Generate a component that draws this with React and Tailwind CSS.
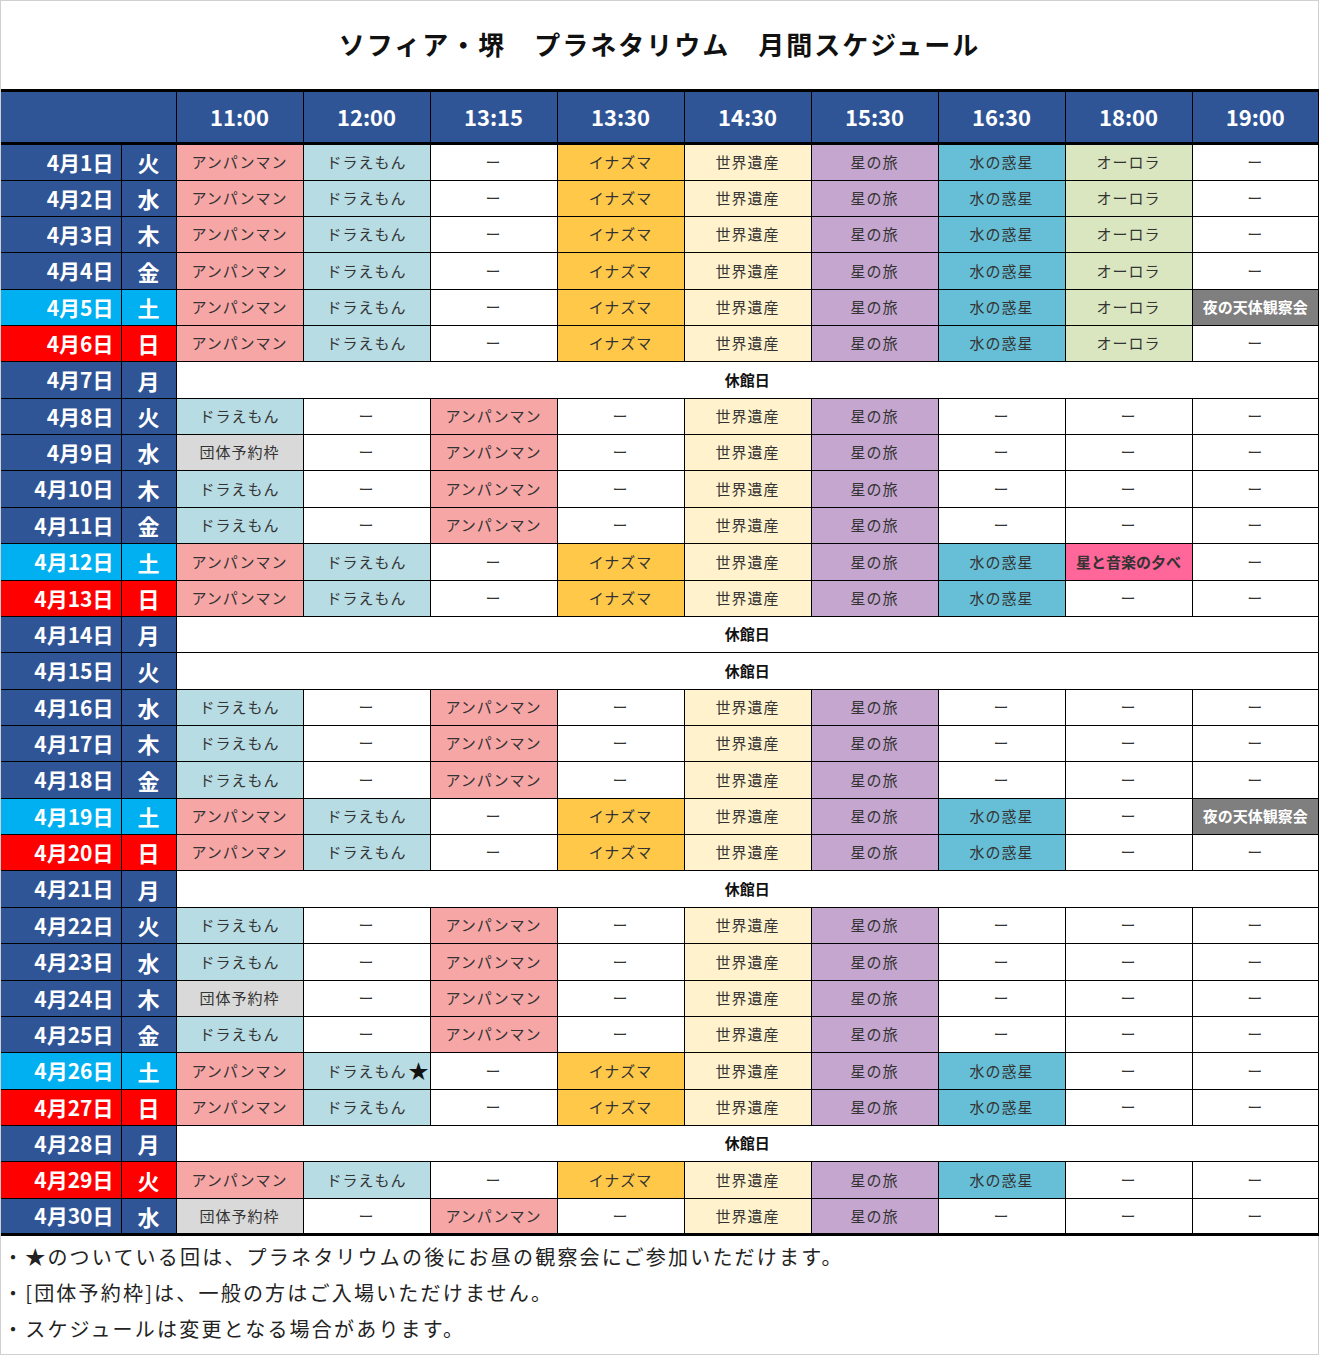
import React from "react";

// programme name -> cell look
const SHOWS = {
  A: { label: "アンパンマン", bg: "bg-[#F7A6A6]" },
  D: { label: "ドラえもん", bg: "bg-[#B7DCE4]" },
  S: { label: "世界遺産", bg: "bg-[#FFF2CC]" },
  I: { label: "イナズマ", bg: "bg-[#FFC848]" },
  H: { label: "星の旅", bg: "bg-[#C4A6CE]" },
  M: { label: "水の惑星", bg: "bg-[#66BFD6]" },
  O: { label: "オーロラ", bg: "bg-[#D9E6BF]" },
  G: { label: "団体予約枠", bg: "bg-[#D9D9D9]" },
  N: { label: "夜の天体観察会", bg: "bg-[#7F7F7F]", special: "text-white font-bold tracking-normal" },
  K: { label: "星と音楽の夕べ", bg: "bg-[#FF6699]", special: "text-[#1a1a1a] font-bold tracking-normal" },
  "-": { label: "ー", bg: "bg-white" },
};

const TIMES = ["11:00", "12:00", "13:15", "13:30", "14:30", "15:30", "16:30", "18:00", "19:00"];

const WEEK = "A D - I S H M O -";
const QUIET = "D - A - S H - - -";

// [day, weekday, kind, schedule] kind: w = weekday, s = saturday, h = sunday/holiday
const DAYS = [
  [1, "火", "w", WEEK],
  [2, "水", "w", WEEK],
  [3, "木", "w", WEEK],
  [4, "金", "w", WEEK],
  [5, "土", "s", "A D - I S H M O N"],
  [6, "日", "h", WEEK],
  [7, "月", "w", null],
  [8, "火", "w", QUIET],
  [9, "水", "w", "G - A - S H - - -"],
  [10, "木", "w", QUIET],
  [11, "金", "w", QUIET],
  [12, "土", "s", "A D - I S H M K -"],
  [13, "日", "h", "A D - I S H M - -"],
  [14, "月", "w", null],
  [15, "火", "w", null],
  [16, "水", "w", QUIET],
  [17, "木", "w", QUIET],
  [18, "金", "w", QUIET],
  [19, "土", "s", "A D - I S H M - N"],
  [20, "日", "h", "A D - I S H M - -"],
  [21, "月", "w", null],
  [22, "火", "w", QUIET],
  [23, "水", "w", QUIET],
  [24, "木", "w", "G - A - S H - - -"],
  [25, "金", "w", QUIET],
  [26, "土", "s", "A D* - I S H M - -"],
  [27, "日", "h", "A D - I S H M - -"],
  [28, "月", "w", null],
  [29, "火", "h", "A D - I S H M - -"],
  [30, "水", "w", "G - A - S H - - -"],
];

const DAY_BG = { w: "bg-[#2F5597]", s: "bg-[#00B0F0]", h: "bg-[#FF0000]" };

const FONT = { fontFamily: '"Noto Sans CJK JP", "Noto Sans", sans-serif' };

function ShowCell({ code }) {
  const star = code.endsWith("*");
  const show = SHOWS[star ? code.slice(0, -1) : code];
  return (
    <td
      className={`relative border border-black text-center text-[15px] tracking-[1px] text-[#333] p-0 whitespace-nowrap ${show.bg} ${show.special || ""}`}
    >
      {show.label}
      {star && (
        <span className="absolute right-[1px] top-1/2 -translate-y-1/2 text-[20px] text-[#111] tracking-normal">
          ★
        </span>
      )}
    </td>
  );
}

export default function App() {
  return (
    <div className="w-[1319px] h-[1355px] bg-white border border-[#d0d0d0]" style={FONT}>
      <div className="h-[88px] flex items-center justify-center pb-[3px]">
        <h1 className="text-[26px] font-bold tracking-[2px] text-[#111]">
          ソフィア・堺　プラネタリウム　月間スケジュール
        </h1>
      </div>

      <table className="table-fixed border-collapse w-[1317px] border-y-[3px] border-r-2 border-black">
        <colgroup>
          <col className="w-[120px]" />
          <col className="w-[55px]" />
          {TIMES.map((t) => (
            <col key={t} className="w-[127px]" />
          ))}
        </colgroup>
        <thead>
          <tr className="h-[53px] bg-[#2F5597] text-white">
            <th colSpan={2} className="border-r border-b-[3px] border-black" />
            {TIMES.map((t) => (
              <th key={t} className="border-x border-b-[3px] border-black text-[22px] font-bold pb-[1px]">
                {t}
              </th>
            ))}
          </tr>
        </thead>
        <tbody>
          {DAYS.map(([d, wd, kind, sched], i) => (
            <tr key={d} className={(i * 11) % 30 < 11 ? "h-[37px]" : "h-[36px]"}>
              <td
                className={`border border-black border-l-0 text-right pr-[7px] text-[21px] font-bold text-white p-0 ${DAY_BG[kind]}`}
              >
                4月{d}日
              </td>
              <td className={`border border-black text-center text-[22px] font-bold text-white p-0 ${DAY_BG[kind]}`}>
                {wd}
              </td>
              {sched ? (
                sched.split(" ").map((c, j) => <ShowCell key={j} code={c} />)
              ) : (
                <td colSpan={9} className="border border-black text-center text-[15px] font-bold text-[#111] bg-white p-0">
                  休館日
                </td>
              )}
            </tr>
          ))}
        </tbody>
      </table>

      <div className="pt-[3px] text-[20px] tracking-[2.2px] text-[#222] leading-[36px] pl-[2px]">
        <p>・★のついている回は、プラネタリウムの後にお昼の観察会にご参加いただけます。</p>
        <p>・[団体予約枠]は、一般の方はご入場いただけません。</p>
        <p>・スケジュールは変更となる場合があります。</p>
      </div>
    </div>
  );
}
